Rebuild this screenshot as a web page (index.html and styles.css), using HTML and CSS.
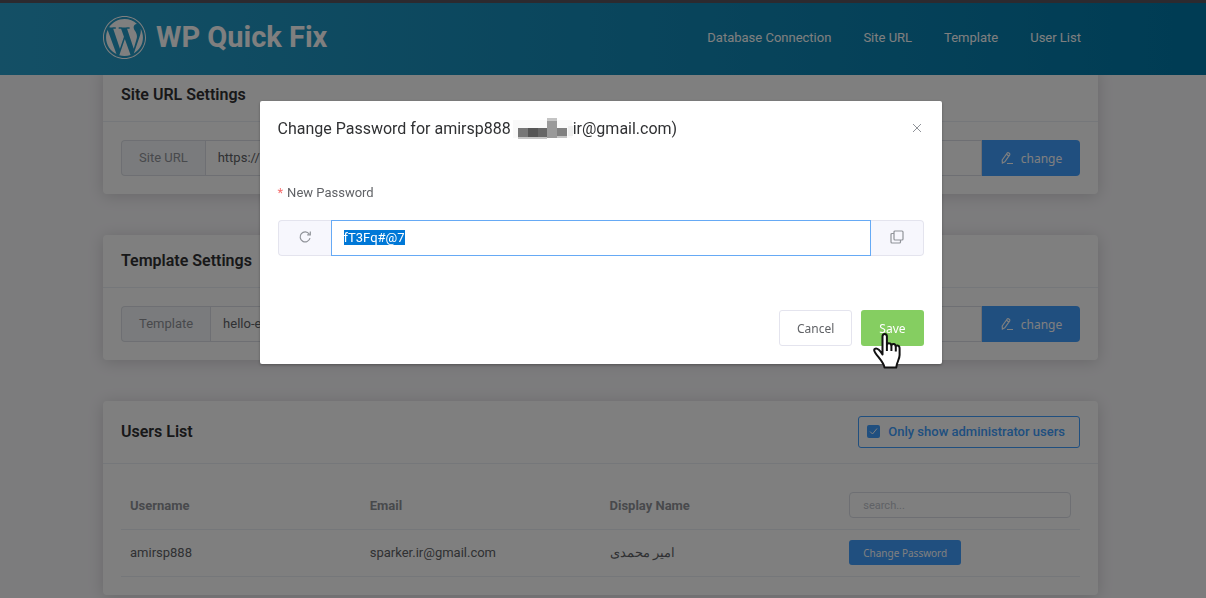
FILE: index.html
```html
<!DOCTYPE html>
<html lang="en">
<head>
  <meta charset="UTF-8" />
  <meta name="viewport" content="width=device-width, initial-scale=1.0"/>
  <title>WP Quick Fix</title>
  <link rel="stylesheet" href="styles.css">
</head>
<body>
  <header class="topbar">
    <div class="container topbar-inner">
      <a class="brand" href="#">
        <svg class="brand-logo" viewBox="8 8 496 496" aria-hidden="true"><path fill="currentColor" d="M61.7 169.4l101.5 278C92.2 413 43.3 340.2 43.3 256c0-30.9 6.6-60.1 18.4-86.6zm337.9 75.9c0-26.3-9.4-44.5-17.5-58.7-10.8-17.5-20.9-32.4-20.9-49.9 0-19.6 14.8-37.8 35.7-37.8.9 0 1.8.1 2.8.2-37.9-34.7-88.3-55.9-143.7-55.9-74.3 0-139.7 38.1-177.8 95.9 5 .2 9.7.3 13.7.3 22.2 0 56.7-2.7 56.7-2.7 11.5-.7 12.8 16.2 1.4 17.5 0 0-11.5 1.3-24.3 2l77.5 230.4L249.8 247l-33.1-90.8c-11.5-.7-22.3-2-22.3-2-11.5-.7-10.1-18.2 1.3-17.5 0 0 35.1 2.7 56 2.7 22.2 0 56.7-2.7 56.7-2.7 11.5-.7 12.8 16.2 1.4 17.5 0 0-11.5 1.3-24.3 2l76.9 228.7 21.2-70.9c9-29.4 16-50.5 16-68.7zm-139.9 29.3l-63.8 185.5c19.1 5.6 39.2 8.7 60.1 8.7 24.8 0 48.5-4.3 70.6-12.1-.6-.9-1.1-1.9-1.5-2.9l-65.4-179.2zm183-120.7c.9 6.8 1.4 14 1.4 21.9 0 21.6-4 45.8-16.2 76.2l-65 187.9C426.2 403 468.7 334.5 468.7 256c0-37-9.4-71.8-26-102.1zM504 256c0 136.8-111.3 248-248 248C119.2 504 8 392.7 8 256 8 119.2 119.2 8 256 8c136.7 0 248 111.2 248 248zm-11.4 0c0-130.5-106.2-236.6-236.6-236.6C125.5 19.4 19.4 125.5 19.4 256S125.6 492.6 256 492.6c130.5 0 236.6-106.1 236.6-236.6z"/></svg>
        <span>WP Quick Fix</span>
      </a>
      <nav class="menu">
        <a href="#database">Database Connection</a>
        <a href="#site-url">Site URL</a>
        <a href="#template">Template</a>
        <a href="#users">User List</a>
      </nav>
    </div>
  </header>

  <main class="container content">
    <section class="card" id="site-url">
      <div class="card-header"><h2>Site URL Settings</h2></div>
      <div class="card-body">
        <div class="input-group">
          <label class="addon" for="siteUrl">Site URL</label>
          <input type="text" id="siteUrl" value="https://" />
          <button type="button" class="btn btn-primary">
            <svg class="icon" viewBox="0 0 14 14" aria-hidden="true"><path d="M2.200 9 7.200 2a1 1 0 0 1 1.300-.2l1 .7a1 1 0 0 1 .2 1.300L4.800 10.800 2.400 12zM6.500 3.200l2.300 1.700M7 12.500h6"/></svg>
            <span>change</span>
          </button>
        </div>
      </div>
    </section>

    <section class="card" id="template">
      <div class="card-header"><h2>Template Settings</h2></div>
      <div class="card-body">
        <div class="input-group">
          <label class="addon" for="templateName">Template</label>
          <input type="text" id="templateName" value="hello-elementor" />
          <button type="button" class="btn btn-primary">
            <svg class="icon" viewBox="0 0 14 14" aria-hidden="true"><path d="M2.200 9 7.200 2a1 1 0 0 1 1.300-.2l1 .7a1 1 0 0 1 .2 1.300L4.800 10.800 2.400 12zM6.500 3.200l2.300 1.700M7 12.500h6"/></svg>
            <span>change</span>
          </button>
        </div>
      </div>
    </section>

    <section class="card" id="users">
      <div class="card-header">
        <h2>Users List</h2>
        <label class="check-box" for="onlyAdmins">
          <input type="checkbox" id="onlyAdmins" checked />
          <span>Only show administrator users</span>
        </label>
      </div>
      <div class="card-body">
        <table class="users-table">
          <thead>
            <tr>
              <th>Username</th>
              <th>Email</th>
              <th>Display Name</th>
              <th><input type="text" class="search" placeholder="search..." aria-label="Search users" /></th>
            </tr>
          </thead>
          <tbody>
            <tr>
              <td>amirsp888</td>
              <td>sparker.ir@gmail.com</td>
              <td lang="fa"><bdi>امیر محمدی</bdi></td>
              <td><button type="button" class="btn btn-primary btn-mini">Change Password</button></td>
            </tr>
          </tbody>
        </table>
      </div>
    </section>
  </main>

  <div class="overlay">
    <div class="dialog" role="dialog" aria-modal="true" aria-labelledby="dialogTitle">
      <div class="dialog-header">
        <h3 id="dialogTitle">
          <span>Change Password for amirsp888</span>
          <svg class="redacted" viewBox="0 0 62 22" aria-hidden="true">
            <path fill="#f9f9f9" d="M2 2h35v18H2zM46 2h15v18H46z"/>
            <path fill="#eeeeee" d="M57 8h5v10h-5z"/>
            <path fill="#777" d="M7 10h10v10H7z"/>
            <path fill="#555" d="M17 10h10v10H17z"/>
            <path fill="#666" d="M27 10h9v10h-9z"/>
            <path fill="#999" d="M36 1h10v19H36z"/>
            <path fill="#808080" d="M46 10h10v8H46z"/>
            <path fill="#c4c4c4" d="M7 19h29v2H7zM36 0h10v3H36zM46 18h10v2H46z"/>
          </svg>
          <span>ir@gmail.com)</span>
        </h3>
        <button type="button" class="close" aria-label="Close">
          <svg viewBox="0 0 10 10" aria-hidden="true"><path d="M1 1l8 8M9 1L1 9"/></svg>
        </button>
      </div>
      <form class="dialog-form" id="passwordForm">
        <label class="field-label" for="newPassword">New Password</label>
        <div class="input-group">
          <button type="button" class="addon-btn" aria-label="Generate password">
            <svg class="icon" viewBox="0 0 14 14" aria-hidden="true"><path d="M12 8.2A5 5 0 1 1 11.2 4M12.3 1.6v3.2H9.2"/></svg>
          </button>
          <input type="text" id="newPassword" class="active" value="fT3Fq#@7" required />
          <button type="button" class="addon-btn" aria-label="Copy password">
            <svg class="icon" viewBox="0 0 14 14" aria-hidden="true"><rect x="4" y="1" width="9" height="9" rx="1"/><path d="M4 3.5H2a1 1 0 0 0-1 1V12a1 1 0 0 0 1 1h7.5a1 1 0 0 0 1-1v-2"/></svg>
          </button>
        </div>
      </form>
      <div class="dialog-footer">
        <button type="button" class="btn btn-plain">Cancel</button>
        <button type="submit" form="passwordForm" class="btn btn-success">
          Save
          <svg class="pointer" viewBox="0 0 28 36" aria-hidden="true"><path d="M9.500 20V3.500q0-2.500 2.200-2.500t2.200 2.500V13q0-3 2.200-2.800 2.300.1 2.300 3.300 0-2.600 2.200-2.400 2.200.2 2.200 3.200 0-2 1.800-1.800 2 .3 2 3V22c0 4-2.600 6.500-3.400 12.500H11.500C10.500 29 4.800 24 2.400 20c-1.300-2.200-1.700-3.400-.5-4.100 1.700-1 4 .1 7.600 5.600zM13.900 13v5M18.400 13.500V18M22.800 14.300V18.500"/></svg>
        </button>
      </div>
    </div>
  </div>

  <script>
    const password = document.getElementById('newPassword');
    password.focus();
    password.select();
  </script>
</body>
</html>
```
FILE: styles.css
```css
* {
  box-sizing: border-box;
}

body {
  font-family: Roboto, sans-serif;
  font-size: 13px;
  color: #606266;
  margin: 0;
  padding-right: 5px;
  height: 100vh;
  overflow: hidden;
  background: #f9f8fb;
}

h2, h3 {
  margin: 0;
}

input, button {
  font-family: inherit;
  font-size: 13px;
}

.container {
  max-width: 995px;
  margin: 0 auto;
}

.topbar {
  position: fixed;
  top: 0;
  left: 0;
  right: 0;
  z-index: 1;
  padding-right: 5px;
  border-top: 3px solid #58545e;
  background: linear-gradient(90deg, #289fcb, #0078a8);
}

.topbar-inner {
  display: flex;
  justify-content: space-between;
  align-items: center;
  height: 72px;
  padding-bottom: 4px;
}

.brand {
  display: flex;
  align-items: center;
  gap: 10px;
  font-size: 29px;
  font-weight: 700;
  color: #fff;
  text-decoration: none;
}

.brand-logo {
  width: 43px;
  height: 43px;
}

.menu {
  display: flex;
  gap: 32px;
  padding-right: 17px;
}

.menu a {
  color: #fff;
  text-decoration: none;
}

.content {
  display: flex;
  flex-direction: column;
  gap: 41px;
  padding-top: 69px;
}

.card {
  background: #fff;
  border-radius: 4px;
  box-shadow: 0 2px 16px rgba(0, 0, 0, 0.16);
}

.card-header {
  display: flex;
  justify-content: space-between;
  align-items: center;
  padding: 15px 18px;
  border-bottom: 1px solid #ebeef5;
}

.card-header h2 {
  font-size: 16px;
  line-height: 22px;
  font-weight: 600;
  color: #303133;
}

.card-body {
  padding: 18px;
}

.input-group {
  display: flex;
  height: 36px;
}

.input-group input {
  flex: 1;
  min-width: 0;
  padding: 0 12px 2px;
  border: 1px solid #dcdfe6;
  color: #606266;
  background: #fff;
  outline: none;
}

.input-group input.active {
  border-color: #66aaf5;
}

.input-group input::selection {
  background: #0078d7;
  color: #fff;
}

.addon, .addon-btn {
  display: flex;
  align-items: center;
  justify-content: center;
  padding: 0 17px 2px;
  border: 1px solid #dcdfe6;
  border-right: 0;
  border-radius: 4px 0 0 4px;
  color: #909399;
  background: #f5f7fa;
}

.addon-btn {
  width: 53px;
  border-color: #e4e4ee;
  background: #f7f7fd;
}

.addon-btn:last-child {
  border-right: 1px solid #e4e4ee;
  border-left: 0;
  border-radius: 0 4px 4px 0;
}

.icon {
  flex: none;
  width: 14px;
  height: 14px;
  fill: none;
  stroke: currentColor;
  stroke-width: 1.2;
}

.btn {
  display: flex;
  align-items: center;
  justify-content: center;
  gap: 7px;
  height: 36px;
  padding: 0 17px;
  border: 1px solid transparent;
  border-radius: 3px;
  font-family: "Noto Sans", sans-serif;
  font-size: 12px;
  cursor: pointer;
}

.btn-primary {
  color: #fff;
  background: #409eff;
}

.input-group .btn {
  width: 98px;
  border-radius: 0 4px 4px 0;
}

.btn-mini {
  height: 25px;
  padding: 0 13px;
  font-size: 10px;
}

.btn-plain {
  border-color: #e4e4ee;
  color: #606266;
  background: #fff;
}

.btn-success {
  position: relative;
  color: #fff;
  background: #85ce61;
}

.check-box {
  display: flex;
  align-items: center;
  gap: 8px;
  height: 32px;
  padding: 0 14px 2px 8px;
  border: 1px solid #409eff;
  border-radius: 3px;
  font-weight: 500;
  color: #409eff;
}

.check-box input {
  appearance: none;
  width: 13px;
  height: 13px;
  margin: 0;
  border-radius: 2px;
  background: #409eff url("data:image/svg+xml,%3Csvg xmlns='http://www.w3.org/2000/svg' viewBox='0 0 13 13'%3E%3Cpath d='M3 6.500l2.500 2.500L10 3.500' fill='none' stroke='white'/%3E%3C/svg%3E");
}

.users-table {
  width: 100%;
  table-layout: fixed;
  border-collapse: collapse;
}

.users-table th, .users-table td {
  height: 47px;
  padding: 0 9px;
  border-bottom: 1px solid #ebeef5;
  text-align: left;
}

.users-table th {
  font-weight: 700;
  color: #909399;
}

.search {
  display: block;
  width: 100%;
  height: 26px;
  padding: 0 13px;
  border: 1px solid #dcdfe6;
  border-radius: 4px;
  font-size: 11px;
}

.search::placeholder {
  color: #c0c4cc;
}

.overlay {
  position: fixed;
  inset: 0;
  z-index: 2;
  padding: 101px 5px 0 0;
  background: rgba(0, 0, 0, 0.5);
}

.dialog {
  width: 90%;
  max-width: 682px;
  margin: 0 auto;
  padding: 17px 18px 18px;
  border-radius: 2px;
  background: #fff;
  box-shadow: 0 1px 3px rgba(0, 0, 0, 0.3);
}

.dialog-header {
  display: flex;
  justify-content: space-between;
  align-items: center;
}

.dialog-header h3 {
  display: flex;
  align-items: center;
  font-size: 16px;
  line-height: 20px;
  font-weight: 400;
  color: #303133;
}

.redacted {
  width: 62px;
  height: 22px;
}

.close {
  display: flex;
  padding: 2px 2px 4px;
  border: 0;
  background: none;
}

.close svg {
  width: 10px;
  height: 10px;
  stroke: #909399;
}

.dialog-form {
  padding: 44px 0 54px;
}

.field-label {
  display: block;
  margin-bottom: 18px;
  line-height: 18px;
}

.field-label::before {
  content: "*";
  margin-right: 4px;
  color: #f56c6c;
}

.dialog-footer {
  display: flex;
  justify-content: flex-end;
  gap: 9px;
}

/* hand cursor over the save button */
.pointer {
  position: absolute;
  top: 22px;
  left: 11px;
  width: 28px;
  height: 36px;
  fill: #fff;
  stroke: #111;
  stroke-width: 2;
  stroke-linejoin: round;
}
```
